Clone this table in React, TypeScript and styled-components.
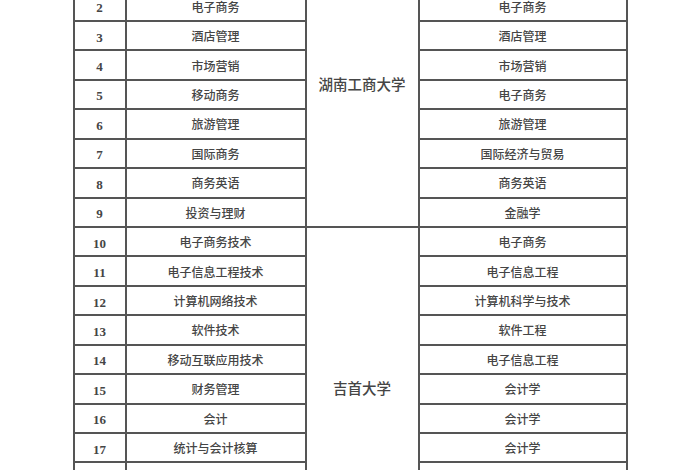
import React from "react";
import styled, { createGlobalStyle } from "styled-components";

const Global = createGlobalStyle`
  html, body { margin: 0; padding: 0; background: #fff; overflow: hidden; }
  body { width: 700px; height: 470px; }
`;

const Page = styled.div`
  width: 700px;
  height: 470px;
  overflow: hidden;
  background: #ffffff;
`;

const Table = styled.table`
  margin: -39px auto 0;
  width: 553px;
  border-collapse: collapse;
  table-layout: fixed;
  font-family: "Liberation Serif", "Noto Sans CJK SC", serif;
  color: #454545;
`;

const Col = styled.col<{ $w: number }>`
  width: ${(p) => p.$w}px;
`;

const Row = styled.tr`
  height: 29.45px;
`;

const Cell = styled.td<{ $num?: boolean }>`
  border: 2px solid #555555;
  padding: 3px 0 0;
  text-align: center;
  vertical-align: middle;
  font-size: ${(p) => (p.$num ? "13px" : "12px")};
  font-weight: ${(p) => (p.$num ? 700 : 500)};
  line-height: 1;
  white-space: nowrap;
`;

const School = styled.td<{ $lift: number }>`
  border: 2px solid #555555;
  padding: 0 0 ${(p) => p.$lift}px;
  text-align: center;
  vertical-align: middle;
  font-size: 14.5px;
  font-weight: 500;
  line-height: 1;
  white-space: nowrap;
`;

type Item = { n: number; major: string; target: string };

const rows: Item[] = [
  { n: 1, major: "会计", target: "会计学" },
  { n: 2, major: "电子商务", target: "电子商务" },
  { n: 3, major: "酒店管理", target: "酒店管理" },
  { n: 4, major: "市场营销", target: "市场营销" },
  { n: 5, major: "移动商务", target: "电子商务" },
  { n: 6, major: "旅游管理", target: "旅游管理" },
  { n: 7, major: "国际商务", target: "国际经济与贸易" },
  { n: 8, major: "商务英语", target: "商务英语" },
  { n: 9, major: "投资与理财", target: "金融学" },
  { n: 10, major: "电子商务技术", target: "电子商务" },
  { n: 11, major: "电子信息工程技术", target: "电子信息工程" },
  { n: 12, major: "计算机网络技术", target: "计算机科学与技术" },
  { n: 13, major: "软件技术", target: "软件工程" },
  { n: 14, major: "移动互联应用技术", target: "电子信息工程" },
  { n: 15, major: "财务管理", target: "会计学" },
  { n: 16, major: "会计", target: "会计学" },
  { n: 17, major: "统计与会计核算", target: "会计学" },
  { n: 18, major: "会计信息管理", target: "财务管理" },
  { n: 19, major: "审计", target: "审计学" },
  { n: 20, major: "金融管理", target: "金融学" },
];

const schools: Record<number, { name: string; span: number; lift: number }> = {
  1: { name: "湖南工商大学", span: 9, lift: 18 },
  10: { name: "吉首大学", span: 11, lift: 0 },
};

const widths = [52, 180, 113, 208];

export default function App() {
  return (
    <Page>
      <Global />
      <Table>
        <colgroup>
          {widths.map((w, i) => (
            <Col key={i} $w={w} />
          ))}
        </colgroup>
        <tbody>
          {rows.map((r) => {
            const s = schools[r.n];
            return (
              <Row key={r.n}>
                <Cell $num>{r.n}</Cell>
                <Cell>{r.major}</Cell>
                {s && (
                  <School rowSpan={s.span} $lift={s.lift}>
                    {s.name}
                  </School>
                )}
                <Cell>{r.target}</Cell>
              </Row>
            );
          })}
        </tbody>
      </Table>
    </Page>
  );
}
